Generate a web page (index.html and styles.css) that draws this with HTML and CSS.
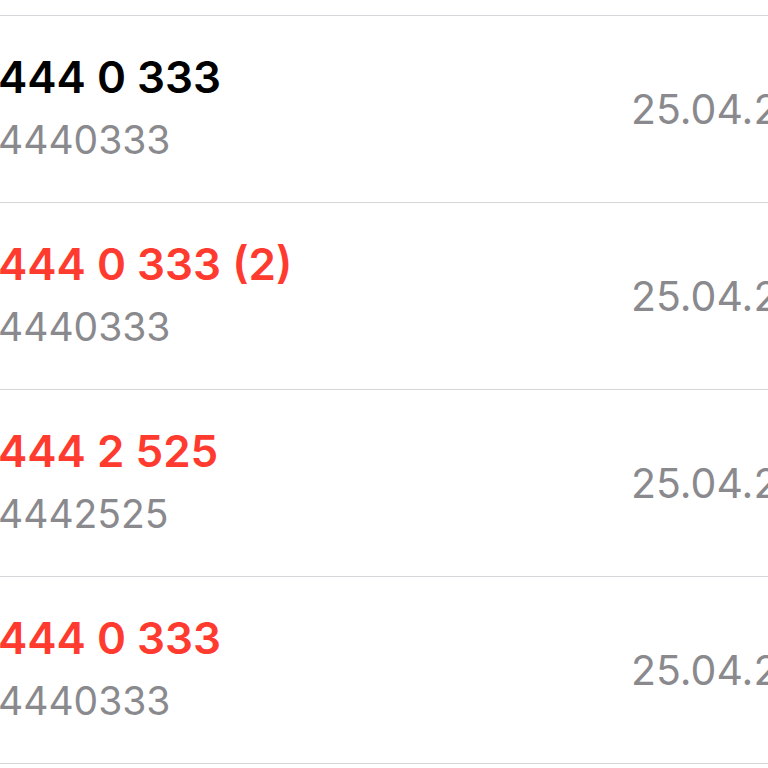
FILE: index.html
```html
<!doctype html>
<html lang="en">
    <head>
        <meta charset="UTF-8" />
        <meta name="viewport" content="width=device-width, initial-scale=1.0" />
        <title>Recents</title>
        <link rel="stylesheet" href="styles.css">
    </head>
    <body>
        <ul class="calls">
            <li class="call">
                <div class="call-info">
                    <div class="call-name">444 0 333</div>
                    <div class="call-number">4440333</div>
                </div>
                <div class="call-date">25.04.2024</div>
            </li>
            <li class="call missed">
                <div class="call-info">
                    <div class="call-name">444 0 333 (2)</div>
                    <div class="call-number">4440333</div>
                </div>
                <div class="call-date">25.04.2024</div>
            </li>
            <li class="call missed">
                <div class="call-info">
                    <div class="call-name">444 2 525</div>
                    <div class="call-number">4442525</div>
                </div>
                <div class="call-date">25.04.2024</div>
            </li>
            <li class="call missed">
                <div class="call-info">
                    <div class="call-name">444 0 333</div>
                    <div class="call-number">4440333</div>
                </div>
                <div class="call-date">25.04.2024</div>
            </li>
        </ul>
    </body>
</html>
```

FILE: styles.css
```css
:root {
    --text-color: #000000;
    --missed-color: #ff3b30;
    --secondary-color: #8a8a8e;
    --separator-color: #d6d6da;
}

html,
body {
    margin: 0;
    padding: 0;
    overflow: hidden;
    background: #ffffff;
}

body {
    font-family: Inter, "Liberation Sans", sans-serif;
    color: var(--text-color);
    width: 768px;
    height: 768px;
}

.calls {
    list-style: none;
    margin: 0 0 0 -2px;
    padding: 15px 0 0 0;
    width: 1000px;
}

.call {
    display: flex;
    align-items: center;
    height: 186px;
    border-top: 1px solid var(--separator-color);
}

.call-info {
    width: 633px;
    display: flex;
    flex-direction: column;
    padding-bottom: 3px;
}

.call-name {
    font-size: 44px;
    font-weight: 600;
    line-height: 56px;
    white-space: nowrap;
}

.missed .call-name {
    color: var(--missed-color);
}

.call-number {
    font-size: 39px;
    line-height: 52px;
    margin-top: 9px;
    color: var(--secondary-color);
}

.call-date {
    font-size: 41px;
    color: var(--secondary-color);
    white-space: nowrap;
}

.call:last-child {
    border-bottom: 1px solid var(--separator-color);
}
```
